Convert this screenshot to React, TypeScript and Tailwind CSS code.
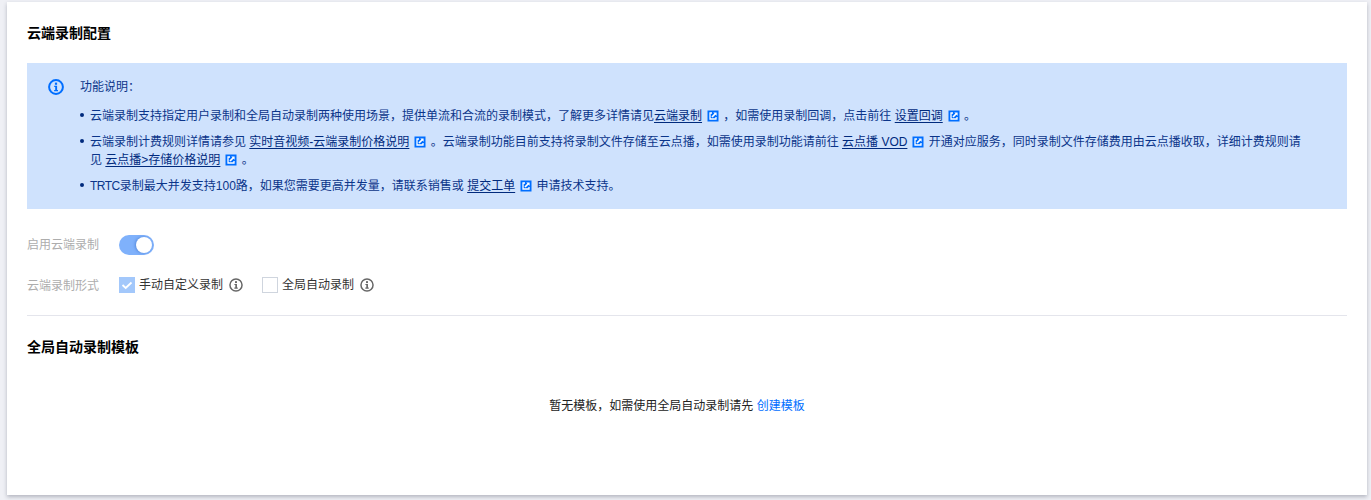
const FONT = "font-['Liberation_Sans','Noto_Sans_CJK_SC',sans-serif]"

function ExternalIcon() {
  return (
    <svg viewBox="0 0 12 12" className="inline-block w-[12px] h-[12px] ml-[5px] mr-[1px] align-[-2px]">
      <rect x="0.5" y="0.5" width="11" height="11" fill="#006eff" />
      <path d="M5 3H3v6h6V7" fill="none" stroke="#fff" strokeWidth="1.3" />
      <path d="M5 7l3.5-3.5" fill="none" stroke="#fff" strokeWidth="1.7" />
      <path d="M6.3 2.4h3.3v3.3z" fill="#fff" />
    </svg>
  )
}

function DocLink({ children, spaced = true }: { children: React.ReactNode; spaced?: boolean }) {
  return (
    <>
      {spaced && ' '}
      <a className="text-[#002a7d] underline underline-offset-2">{children}</a>
      <ExternalIcon />
    </>
  )
}

function InfoCircle({ color = '#666', big = false }: { color?: string; big?: boolean }) {
  return (
    <svg viewBox="0 0 16 16" className={big ? 'w-4 h-4 shrink-0' : 'w-[14px] h-[14px] shrink-0'}>
      <circle cx="8" cy="8" r="6.9" fill="none" stroke={color} strokeWidth={big ? 2 : 1.7} />
      <rect x="6.9" y="3.6" width="2.2" height="2.2" fill={color} />
      <path d="M6.2 6.8h2.9v4.1h.9v1.3H6.1v-1.3h1.1V8.1h-1z" fill={color} />
    </svg>
  )
}

function Item({ children }: { children: React.ReactNode }) {
  return (
    <li className="relative pl-[10px] before:absolute before:left-0 before:top-[6px] before:w-1 before:h-1 before:rounded-full before:bg-[#002a7d]">
      {children}
    </li>
  )
}

export default function App() {
  return (
    <div className={`${FONT} h-[500px] bg-[#eff0f5] pt-[2px] pl-[7px] pr-[4px] text-xs overflow-hidden`}>
      <div className="h-[493px] bg-white px-5 shadow-[0_2px_4px_rgba(54,58,80,0.32)]">
        <h2 className="pt-[22px] h-[61px] text-sm leading-[18px] font-bold text-black">云端录制配置</h2>

        <div className="flex h-[146px] bg-[#cfe2fd] text-[#0b358a] pl-[21px] pr-[45px] pt-[15px] leading-[18px]">
          <div className="w-[32px] shrink-0 pt-[1px]">
            <InfoCircle color="#006eff" big />
          </div>
          <div className="flex-1">
            <p>功能说明：</p>
            <ul className="mt-[11px] flex flex-col gap-2">
              <Item>
                云端录制支持指定用户录制和全局自动录制两种使用场景，提供单流和合流的录制模式，了解更多详情请见
                <DocLink spaced={false}>云端录制</DocLink> ，如需使用录制回调，点击前往
                <DocLink>设置回调</DocLink> 。
              </Item>
              <Item>
                云端录制计费规则详情请参见
                <DocLink>实时音视频-云端录制价格说明</DocLink> 。云端录制功能目前支持将录制文件存储至云点播，如需使用录制功能请前往
                <DocLink>云点播 VOD</DocLink> 开通对应服务，同时录制文件存储费用由云点播收取，详细计费规则请见
                <DocLink>云点播&gt;存储价格说明</DocLink> 。
              </Item>
              <Item>
                <span className="tracking-[-0.5px]">TRTC</span>录制最大并发支持100路，如果您需要更高并发量，请联系销售或
                <DocLink>提交工单</DocLink> 申请技术支持。
              </Item>
            </ul>
          </div>
        </div>

        <div className="flex items-center h-[24px] mt-6 text-[#adadad]">
          <span className="w-[92px]">启用云端录制</span>
          <span className="relative w-[35px] h-[20px] rounded-full bg-[#7fb1fb]">
            <span className="absolute right-[2px] top-[2px] w-[16px] h-[16px] rounded-full bg-white shadow-[-1px_0_3px_rgba(0,60,160,0.35)]" />
          </span>
        </div>

        <div className="flex items-center h-[20px] mt-[18px]">
          <span className="w-[92px] text-[#adadad] pt-[1px]">云端录制形式</span>
          <span className="flex items-center justify-center w-4 h-4 bg-[#a3c8fb]">
            <svg viewBox="0 0 16 16" className="w-4 h-4">
              <path d="M3.5 8l3.2 3L12.5 5.5" fill="none" stroke="#fff" strokeWidth="1.8" />
            </svg>
          </span>
          <span className="ml-1 text-[#333]">手动自定义录制</span>
          <span className="ml-[6px]"><InfoCircle /></span>
          <span className="ml-[19px] w-4 h-4 border border-[#cfd5de] bg-white" />
          <span className="ml-1 text-[#333]">全局自动录制</span>
          <span className="ml-[6px]"><InfoCircle /></span>
        </div>

        <div className="mt-5 border-t border-[#e4e5ec]" />

        <h3 className="mt-[22px] text-sm leading-[18px] font-bold text-black">全局自动录制模板</h3>

        <p className="mt-[41px] text-center text-[#222] leading-[18px] pr-5">
          暂无模板，如需使用全局自动录制请先 <a className="text-[#006eff]">创建模板</a>
        </p>
      </div>
    </div>
  )
}
